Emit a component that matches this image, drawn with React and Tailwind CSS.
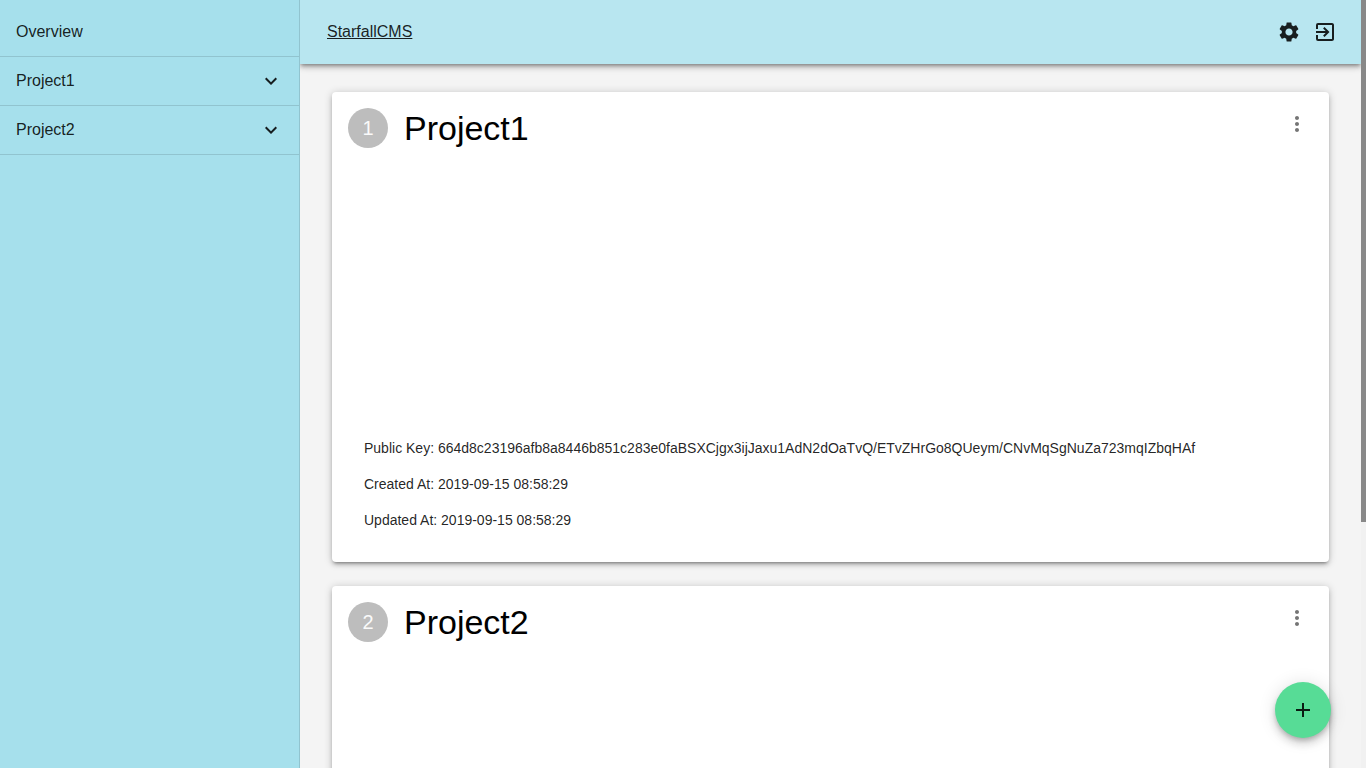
import { MdAdd, MdExitToApp, MdExpandMore, MdMoreVert, MdSettings } from "react-icons/md";

const projects = [
  {
    id: 1,
    name: "Project1",
    details: [
      {
        label: "Public Key",
        value:
          "664d8c23196afb8a8446b851c283e0faBSXCjgx3ijJaxu1AdN2dOaTvQ/ETvZHrGo8QUeym/CNvMqSgNuZa723mqIZbqHAf",
      },
      { label: "Created At", value: "2019-09-15 08:58:29" },
      { label: "Updated At", value: "2019-09-15 08:58:29" },
    ],
  },
  { id: 2, name: "Project2", details: [] },
];

function Sidebar() {
  return (
    <nav className="w-[300px] shrink-0 overflow-y-auto border-r border-black/12 bg-[#a6e0ec] pt-2 text-black/87">
      <a href="#overview" className="flex h-[49px] items-center border-b border-black/12 px-4">
        Overview
      </a>
      {projects.map((project) => (
        <button
          key={project.id}
          type="button"
          aria-expanded="false"
          className="flex h-[49px] w-full items-center justify-between border-b border-black/12 px-4"
        >
          {project.name}
          <MdExpandMore className="size-6" />
        </button>
      ))}
    </nav>
  );
}

function ProjectCard({ project }) {
  return (
    <article className="flex min-h-[470px] shrink-0 flex-col rounded bg-white shadow-[0_1px_8px_rgba(0,0,0,0.2),0_3px_4px_rgba(0,0,0,0.14),0_3px_3px_-2px_rgba(0,0,0,0.32)]">
      <header className="flex items-center gap-4 p-4">
        <span className="flex size-10 shrink-0 items-center justify-center rounded-full bg-[#bdbdbd] text-xl text-[#fafafa]">
          {project.id}
        </span>
        <h2 className="flex-1 text-[34px] leading-10 text-black">{project.name}</h2>
        <button
          type="button"
          aria-label={`${project.name} menu`}
          className="-my-2 -mr-2 flex size-12 items-center justify-center self-start rounded-full text-black/54"
        >
          <MdMoreVert className="size-6" />
        </button>
      </header>
      <div className="mt-auto flex flex-col gap-4 px-8 pt-4 pb-8 text-sm text-black/87">
        {project.details.map(({ label, value }) => (
          <p key={label} className="break-all">
            {label}: {value}
          </p>
        ))}
      </div>
    </article>
  );
}

export default function App() {
  return (
    <div className="flex h-screen bg-[#f4f4f4] font-['Liberation_Sans',Arial,sans-serif] text-base">
      <Sidebar />
      <div className="flex min-w-0 flex-1 flex-col overflow-hidden">
        <header className="z-10 flex h-16 shrink-0 items-center justify-between bg-[#b8e6f0] pr-6 pl-[27px] text-black/87 shadow-[0_2px_4px_-1px_rgba(0,0,0,0.4),0_4px_5px_rgba(0,0,0,0.14),0_1px_10px_rgba(0,0,0,0.12)]">
          <a href="#home" className="underline">
            StarfallCMS
          </a>
          <div className="flex gap-3">
            <button type="button" aria-label="Settings">
              <MdSettings className="size-6" />
            </button>
            <button type="button" aria-label="Sign out">
              <MdExitToApp className="size-6" />
            </button>
          </div>
        </header>
        <main className="flex flex-1 flex-col gap-6 overflow-y-auto px-8 py-7 [scrollbar-width:none]">
          {projects.map((project) => (
            <ProjectCard key={project.id} project={project} />
          ))}
        </main>
      </div>
      <div className="w-[5px] shrink-0 bg-[#f1f1f1]">
        <div className="h-[68%] bg-[#888888]" />
      </div>
      <button
        type="button"
        aria-label="Add project"
        className="fixed right-[35px] bottom-[30px] z-20 flex size-14 items-center justify-center rounded-full bg-[#57dc96] text-black/87 shadow-[0_3px_5px_-1px_rgba(0,0,0,0.2),0_6px_10px_rgba(0,0,0,0.14),0_1px_18px_rgba(0,0,0,0.12)]"
      >
        <MdAdd className="size-6" />
      </button>
    </div>
  );
}
